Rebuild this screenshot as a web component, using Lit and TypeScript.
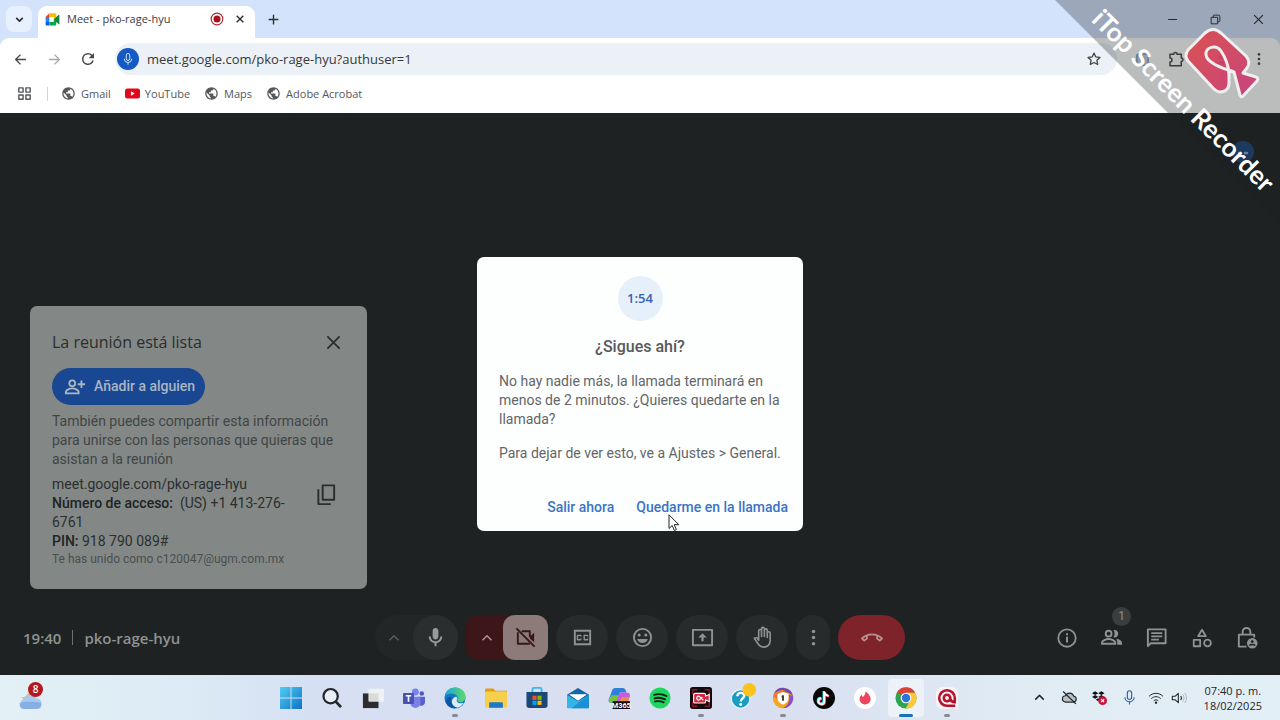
import { LitElement, html, svg, css, TemplateResult, SVGTemplateResult } from "lit";
import { customElement } from "lit/decorators.js";

const icon = (content: SVGTemplateResult, size = 24, box = "0 0 24 24") =>
  html`<svg width=${size} height=${size} viewBox=${box} aria-hidden="true">${content}</svg>`;

const line = (d: string, w = 2) =>
  svg`<path d=${d} fill="none" stroke="currentColor" stroke-width=${w} stroke-linejoin="round"></path>`;
const fill = (d: string) => svg`<path d=${d} fill="currentColor" fill-rule="evenodd"></path>`;

const I = {
  chevDown: svg`${line("M6 9l6 6 6-6", 3)}`,
  chevUp: svg`${line("M6 15l6-6 6 6", 2)}`,
  close: svg`${line("M5 5l14 14M19 5L5 19", 2)}`,
  closeBold: svg`${line("M4 4l16 16M20 4L4 20", 3.4)}`,
  plus: svg`${line("M12 3v18M3 12h18", 2.6)}`,
  back: svg`${line("M22 12H4M12 3l-9 9 9 9", 2.5)}`,
  forward: svg`${line("M2 12h18M12 3l9 9-9 9", 2.5)}`,
  reload: fill("M17.65 6.35A7.95 7.95 0 0 0 12 4a8 8 0 1 0 7.73 10h-2.08A6 6 0 1 1 12 6c1.66 0 3.14.69 4.22 1.78L13 11h7V4l-2.35 2.35z"),
  mic: fill("M12 14c1.66 0 3-1.34 3-3V5c0-1.66-1.34-3-3-3S9 3.34 9 5v6c0 1.66 1.34 3 3 3zM17 11c0 2.76-2.24 5-5 5s-5-2.24-5-5H5c0 3.53 2.61 6.43 6 6.92V21h2v-3.08c3.39-.49 6-3.39 6-6.92h-2z"),
  micLine: svg`<rect x="9" y="2.5" width="6" height="12" rx="3" fill="none" stroke="currentColor" stroke-width="1.600"></rect>${line("M5.500 11.500a6.500 6.500 0 0 0 13 0M12 18v4", 1.6)}`,
  star: svg`${line("M12 3.200l2.700 5.700 6.200.8-4.500 4.300 1.100 6.200L12 17.200l-5.500 3 1.100-6.200L3.100 9.700l6.200-.8z", 2)}`,
  puzzle: svg`${line("M4 5.500h5a2.200 2.200 0 0 1 4.400 0H19v5.300a2.200 2.200 0 0 1 0 4.400V21H4v-5a2.600 2.600 0 0 0 0-5.200z", 2)}`,
  dots: svg`<g fill="currentColor"><circle cx="12" cy="5" r="2"></circle><circle cx="12" cy="12" r="2"></circle><circle cx="12" cy="19" r="2"></circle></g>`,
  apps: svg`${line("M4 4h6v6H4zM14 4h6v6h-6zM4 14h6v6H4zM14 14h6v6h-6z", 2)}`,
  globe: svg`<path fill="#54585b" d="M12 2C6.480 2 2 6.480 2 12s4.480 10 10 10 10-4.480 10-10S17.520 2 12 2zm-1 17.930c-3.950-.49-7-3.850-7-7.930 0-.62.08-1.210.21-1.790L9 15v1c0 1.100.9 2 2 2v1.930zm6.900-2.540c-.26-.81-1-1.390-1.900-1.390h-1v-3c0-.55-.45-1-1-1H8v-2h2c.55 0 1-.45 1-1V7h2c1.100 0 2-.9 2-2v-.41c2.930 1.190 5 4.060 5 7.410 0 2.080-.8 3.970-2.100 5.390z"></path>`,
  youtube: svg`<rect x="0" y="4" width="24" height="16" rx="4" fill="#e0061c"></rect><path d="M9.500 8.500v7l6-3.500z" fill="#fff"></path>`,
  meet: svg`<path d="M1 8l6-6v6z" fill="#e33b2e"></path><path d="M7 2h9.500c1 0 1.500.6 1.500 1.500V9l-4 3V8H7z" fill="#fbbc05"></path><path d="M1 8h6v8H1z" fill="#2684fc"></path><path d="M1 16h6v5.500H2.500C1.500 21.500 1 21 1 20z" fill="#0b5fd0"></path><path d="M7 16h7v-4l4 3v5c0 1-.5 1.500-1.500 1.500H7z" fill="#00a94b"></path><path d="M14 12l4-4 4-3.500c.6-.4 1-.2 1 .5v14c0 .7-.5.9-1 .5L18 16z" fill="#0a8a3a"></path>`,
  record: svg`<circle cx="12" cy="12" r="10" fill="none" stroke="#b3262e" stroke-width="2"></circle><circle cx="12" cy="12" r="6" fill="#a5131d"></circle>`,
  minimize: svg`${line("M5 12h14", 1.6)}`,
  restore: svg`${line("M4 8h12v12H4zM8 8V5.500c0-1 .5-1.500 1.500-1.500H18c1.500 0 2 .5 2 2v8.500c0 1-.5 1.500-1.500 1.500H16", 1.8)}`,
  addPerson: svg`<circle cx="9" cy="8" r="3.200" fill="none" stroke="currentColor" stroke-width="2"></circle>${line("M2 19v-1.500c0-2.500 4.500-4 7-4s7 1.500 7 4V19zM15 9h8M19 5v8", 2)}`,
  copy: svg`${line("M8 2.500h12v15H8zM3.500 6.500v15.500h13", 2)}`,
  camOff: svg`${line("M8 5.500h8.500v6M4 6.500v12h12.500M2.500 2.500l19 19", 2)}<path d="M16.500 11l4.500-4v10l-4.500-4z" fill="currentColor"></path>`,
  cc: fill("M21 4H3v16h18zM19 18H5V6h14v12zM7 15h3c.55 0 1-.45 1-1v-1H9.500v.5h-2v-3h2v.5H11v-1c0-.55-.45-1-1-1H7c-.55 0-1 .45-1 1v4c0 .55.45 1 1 1zm7 0h3c.55 0 1-.45 1-1v-1h-1.500v.5h-2v-3h2v.5H18v-1c0-.55-.45-1-1-1h-3c-.55 0-1 .45-1 1v4c0 .55.45 1 1 1z"),
  smile: svg`<circle cx="12" cy="12" r="9" fill="none" stroke="currentColor" stroke-width="2"></circle><circle cx="8.500" cy="9.300" r="1.600" fill="currentColor"></circle><circle cx="15.500" cy="9.300" r="1.600" fill="currentColor"></circle><path d="M6.500 13.500h11c-.7 2.600-2.800 4.200-5.500 4.200s-4.800-1.600-5.500-4.200z" fill="currentColor"></path>`,
  present: svg`${line("M2 4h20v16H2z", 2)}<path d="M12 7.500l4.500 4.500h-3.300v4h-2.400v-4H7.500z" fill="currentColor"></path>`,
  hand: svg`${line("M8 13V5.200a1.500 1.500 0 0 1 3 0V11V3a1.500 1.500 0 0 1 3 0v8V4.500a1.500 1.500 0 0 1 3 0V12V7.500a1.500 1.500 0 0 1 3 0V15.500c0 4-3 6.500-6.500 6.500-3.500 0-5.300-1.500-6.800-4.300L3.500 12.800c1.500-1 3-.5 3.700.9L8 15z", 1.7)}`,
  hangup: fill("M12 9c-1.600 0-3.150.25-4.600.72v3.100c0 .39-.23.74-.56.9-.98.49-1.870 1.120-2.660 1.850-.18.18-.43.28-.7.28-.28 0-.53-.11-.71-.29L.29 13.080c-.18-.17-.29-.42-.29-.7 0-.28.11-.53.29-.71C3.340 8.780 7.460 7 12 7s8.660 1.780 11.710 4.670c.18.18.29.43.29.71 0 .28-.11.53-.29.71l-2.480 2.480c-.18.18-.43.29-.71.29-.27 0-.52-.11-.7-.28-.79-.74-1.690-1.360-2.670-1.850-.33-.16-.56-.5-.56-.9v-3.100C15.150 9.250 13.600 9 12 9zM5.400 10.600l-2.900 1.800 1.100 1.100 1.900-1.300zM18.600 10.600l2.900 1.800-1.100 1.100-1.900-1.300z"),
  info: svg`<circle cx="12" cy="12" r="9.500" fill="none" stroke="currentColor" stroke-width="2"></circle>${line("M12 10.500V17M12 6.800V9", 2.2)}`,
  people: svg`<circle cx="9" cy="8" r="3" fill="none" stroke="currentColor" stroke-width="2"></circle>${line("M2 18.500V17.500c0-2.400 4.500-3.900 7-3.900s7 1.500 7 3.900v1z", 2)}<path d="M14 4.200c3-.6 5 1.300 5 3.800s-2 4.400-5 3.800c1.600-2.200 1.600-5.400 0-7.600zM17 13.200c3.500.6 6 2 6 4.300v2h-5v-2c0-1.800-.4-3.200-1-4.300z" fill="currentColor"></path>`,
  chat: svg`${line("M3 21V3.500h18.500V18H6z", 2)}${line("M6.500 7.500h11.500M6.500 10.800h11.500M6.500 14.100h8", 1.8)}`,
  shapes: svg`${line("M12 3l4.200 7H7.800zM3 14h7v7H3z", 2)}<circle cx="18" cy="17.500" r="3.700" fill="none" stroke="currentColor" stroke-width="2"></circle>`,
  lock: svg`${line("M12 21.500H4V9h16v3M8 9V6a4 4 0 0 1 8 0v3", 2)}<circle cx="18" cy="18" r="5.500" fill="currentColor"></circle><circle cx="18" cy="16.300" r="1.500" fill="#1e2222"></circle><path d="M15 20.500c1-1.500 5-1.500 6 0" stroke="#1e2222" stroke-width="1.500" fill="none"></path>`,
  cloudOff: svg`<path d="M6.500 18.500a4.500 4.500 0 0 1 0-9A6 6 0 0 1 17.800 10a4.300 4.300 0 0 1 0 8.500z" fill="#b8c0c4" stroke="currentColor" stroke-width="1.700"></path>${line("M3 3.500l18 17.500", 1.8)}`,
  dropbox: svg`<path d="M5 2l5 3-5 3-5-3zM15 2l5 3-5 3-5-3zM5 8l5 3-5 3-5-3zM15 8l5 3-5 3-5-3zM10 13l4 2.500-4 2.500-4-2.500z" fill="#111"></path><circle cx="17" cy="17" r="7" fill="#c8133c"></circle><path d="M14.500 14.500l5 5M19.500 14.500l-5 5" stroke="#fff" stroke-width="1.700"></path>`,
  wifi: svg`${line("M1.500 9.500c6-6 15-6 21 0M5 13c4-4 10-4 14 0M8.500 16.300c2-2 5-2 7 0", 1.5)}<circle cx="12" cy="19" r="1.800" fill="currentColor"></circle>`,
  sound: svg`${line("M2 9.500h4l5-4.500v14l-5-4.500H2z", 1.6)}${line("M14.500 9c1.500 1.800 1.500 4.200 0 6", 1.6)}<path d="M17.500 6.500c2.700 3.200 2.700 7.800 0 11M20.500 4.500c3.600 4.500 3.600 10.500 0 15" fill="none" stroke="#a9b1b6" stroke-width="1.400"></path>`,
};

const APPS: { name: string; art: SVGTemplateResult; state?: string }[] = [
  { name: "Inicio", art: svg`<defs><linearGradient id="w" x2="1" y2="1"><stop stop-color="#52cdf2"></stop><stop offset="1" stop-color="#0f72c4"></stop></linearGradient></defs><path d="M0 0h11.500v11.500H0zM12.500 0H24v11.500H12.500zM0 12.500h11.500V24H0zM12.500 12.500H24V24H12.500z" fill="url(#w)"></path>` },
  { name: "Buscar", art: svg`<circle cx="10.500" cy="10" r="7.800" fill="#e9eef6" stroke="#22262a" stroke-width="2.400"></circle><path d="M16.200 16l5.600 6" stroke="#22262a" stroke-width="3"></path>` },
  { name: "Vista de tareas", art: svg`<path d="M1 7h17v16H1z" fill="#2b2c2d"></path><rect x="7" y="2" width="17" height="14" rx="1" fill="#f3f3f1" opacity=".88"></rect>` },
  { name: "Teams", art: svg`<circle cx="13.500" cy="5.500" r="3.800" fill="#7b83eb"></circle><circle cx="20.500" cy="7" r="2.500" fill="#5059c9"></circle><path d="M17 10.500h7v6a4 4 0 0 1-6 3.500z" fill="#5a61cf"></path><path d="M8 10.500h11v7a5.500 5.500 0 0 1-11 0z" fill="#7b80e4"></path><rect x="0" y="6.500" width="12" height="12" rx="1" fill="#4a51b4"></rect><path d="M3 9.500h6M6 9.500v6.500" stroke="#fff" stroke-width="1.800"></path>` },
  { name: "Edge", state: "open", art: svg`<defs><linearGradient id="e" x2="1"><stop stop-color="#1aa6dc"></stop><stop offset="1" stop-color="#5fd968"></stop></linearGradient></defs><circle cx="12" cy="12" r="11.500" fill="#1577c4"></circle><path d="M.7 10.500C2 3.500 7 .5 12 .5c7 0 11.500 5 11.500 10 0 4-3 6-6 6-2.500 0-3.500-1-3-2.200.8-1.300 1-3.800-.8-5.300C10.500 6 3 6.500.7 10.500z" fill="url(#e)"></path><path d="M14 14c-1 3 3 4.700 7.500 3.300-1.500 2.700-4 4.700-7 5.400-4.500-1-6.500-4.700-5.700-8 .5-2.500 2.400-4 4.700-4.200 1.300.9 1.200 2.300.5 3.500z" fill="#d9ebf6"></path><path d="M9 11c-3 4-1 10 5.500 11.700A11 11 0 0 1 2.500 18C1 13 5 10 9 11z" fill="#0c55a2"></path>` },
  { name: "Explorador", art: svg`<path d="M0 3c0-1 .5-1.500 1.500-1.500H9l2.500 2.500H24v5H0z" fill="#e0a016"></path><rect x="0" y="5" width="24" height="17.500" rx="1.500" fill="#f8cf4b"></rect><path d="M4.500 22.500V18c0-1 .5-1.500 1.500-1.500h12c1 0 1.500.5 1.500 1.500v4.500z" fill="#1d78c4"></path>` },
  { name: "Store", art: svg`<path d="M7 6V2.500C7 1.500 7.500 1 8.500 1h7c1 0 1.500.5 1.500 1.500V6" fill="none" stroke="#35b7e8" stroke-width="2"></path><path d="M.5 5.500h23V20a3 3 0 0 1-3 3h-17a3 3 0 0 1-3-3z" fill="#1c4878"></path><path d="M7 9.500h4.500V14H7z" fill="#f25022"></path><path d="M12.500 9.500H17V14h-4.500z" fill="#7fba00"></path><path d="M7 15h4.500v4.500H7z" fill="#00a4ef"></path><path d="M12.500 15H17v4.500h-4.500z" fill="#ffb900"></path>` },
  { name: "Correo", art: svg`<path d="M0 8.500L12 1l12 7.500V23H0z" fill="#1364a8"></path><path d="M2.500 8.300h19L12 15z" fill="#fff"></path><path d="M0 8.500l12 7.200L24 8.500V22c0 .8-.4 1.200-1.200 1.200H1.200C.4 23.200 0 22.800 0 22z" fill="#34b5e8"></path><path d="M24 8.500L5 23.200h18c.7 0 1-.4 1-1z" fill="#1b8fd3"></path><path d="M2.500 8.300h19L12 14z" fill="#fff"></path>` },
  { name: "M365", art: svg`<path d="M5 2.500C6 1.500 7 1 8.500 1H16c2 0 3 1 3.500 3l.5 2h-7l-3 9c-.5 1.500-1 2-2.500 2H3c-2 0-2.800-1.500-2.200-3.500z" fill="#2f80d8"></path><path d="M1 13l3-4h8l-2 6c-.5 1.500-1 2-2.500 2H3c-2 0-2.500-2-2-4z" fill="#7bc043"></path><path d="M13 6h7c3 0 4.500 1.500 3.800 4l-2 6H9z" fill="#c65be0"></path><path d="M15 11h8.500l-1.700 5H12z" fill="#f08a4b"></path><rect x="5" y="15.500" width="19" height="8.500" fill="#0c0c0c"></rect><text x="14.500" y="22.500" font-size="8" font-weight="700" fill="#fff" text-anchor="middle" font-family="Roboto, sans-serif">M365</text>` },
  { name: "Spotify", art: svg`<circle cx="12" cy="12" r="11.500" fill="#1ed760"></circle><path d="M5.500 8.500c4.500-1.300 9.500-.9 13.500 1.300M6 12.300c4-1 8-.6 11.500 1.200M6.500 15.800c3.300-.8 6.500-.5 9.500 1" fill="none" stroke="#0c1f12" stroke-width="2" stroke-linecap="round"></path>` },
  { name: "Grabador", state: "open", art: svg`<rect x="0" y="0" width="24" height="24" rx="3" fill="#120b0d"></rect><path d="M3 8V3h5M16 3h5v5M3 16v5h5M16 21h5v-5" fill="none" stroke="#8a1628" stroke-width="1.500"></path><path d="M5.500 7h10a1.500 1.500 0 0 1 1.500 1.500V10l4-2v8l-4-2v2a1.500 1.500 0 0 1-1.500 1.500h-10A1.500 1.500 0 0 1 4 16V8.500A1.500 1.500 0 0 1 5.500 7z" fill="#d8243f" stroke="#fff" stroke-width="1.200"></path><path d="M14.500 14.500l-4-4a2 2 0 1 0 0 3.200l3-2.700" fill="none" stroke="#fff" stroke-width="1.300"></path>` },
  { name: "Ayuda", art: svg`<circle cx="10.500" cy="13" r="10.500" fill="#fff"></circle><circle cx="10.500" cy="13" r="9.500" fill="#1b9cc4"></circle><path d="M7 10c0-5 7.500-4.500 7.500-.5 0 3-3.800 3-3.800 6.300" fill="none" stroke="#fff" stroke-width="2.600"></path><circle cx="10.600" cy="19" r="1.600" fill="#fff"></circle><circle cx="20" cy="3" r="7.500" fill="#fbc31c"></circle>` },
  { name: "Norton", state: "open", art: svg`<circle cx="12" cy="12" r="11.200" fill="#f5a623"></circle><path d="M2 7A11.200 11.200 0 0 1 23 10c-4-5-14-7-21-3z" fill="#6a48c8"></path><path d="M23 10c1 7-4 13-11 13 6-3 8-8 6-15z" fill="#8350d8"></path><path d="M1 10c2-5 9-8 14-6-6 0-9 6-6 12z" fill="#ef7a35"></path><path d="M12 5.500l6 2v4.500c0 3.500-2.500 6-6 7.300-3.500-1.300-6-3.800-6-7.300V7.500z" fill="#fff"></path><path d="M12 9v6M10.500 10.500h2" stroke="#333" stroke-width="2"></path>` },
  { name: "TikTok", art: svg`<circle cx="12" cy="12" r="12" fill="#050505"></circle><path d="M12.300 5v10.500a3.200 3.200 0 1 1-3.200-3.200M12.300 5c.3 2.800 2 4.300 4.700 4.500" transform="translate(-.7 -.6)" fill="none" stroke="#25f4ee" stroke-width="2.400"></path><path d="M12.300 5v10.500a3.200 3.200 0 1 1-3.200-3.200M12.300 5c.3 2.800 2 4.300 4.700 4.500" transform="translate(.8 .7)" fill="none" stroke="#fe2c55" stroke-width="2.400"></path><path d="M12.300 5v10.500a3.200 3.200 0 1 1-3.200-3.200M12.300 5c.3 2.800 2 4.300 4.700 4.500" fill="none" stroke="#fff" stroke-width="2.200"></path>` },
  { name: "Tinder", art: svg`<circle cx="12" cy="12" r="12" fill="#fff"></circle><path d="M12.500 5c3 2 5.700 5 5.700 8.300A5.900 5.900 0 0 1 12 19a5.900 5.900 0 0 1-6-5.700c0-2 1-3.700 2.400-4.800.1 1.300.6 2 1.500 2.300C11.400 9.300 12.700 7.500 12.500 5z" fill="#f0435f"></path>` },
  { name: "Chrome", state: "active", art: svg`<circle cx="12" cy="12" r="11.500" fill="#2fa352"></circle><path d="M2 6.200A11.500 11.500 0 0 1 22 6.200H12L7 15z" fill="#dc4237"></path><path d="M22 6.200A11.500 11.500 0 0 1 11.500 23.500l5-8.700L17 9z" fill="#fcc934"></path><path d="M12 6.200h10L17 12z" fill="#fcc934"></path><path d="M2 6.200l5 8.600 1-6z" fill="#2fa352"></path><circle cx="12" cy="12" r="5.800" fill="#fff"></circle><circle cx="12" cy="12" r="4.600" fill="#2d74da"></circle>` },
  { name: "iTop", state: "open", art: svg`<path d="M7 0h10a7 7 0 0 1 7 7v17H7a7 7 0 0 1-7-7V7a7 7 0 0 1 7-7z" fill="#fbf3f3"></path><path d="M21 20.500h-9A8.500 8.500 0 1 1 20.500 12v4.500q-4.500 0-5-4.500M15.500 12a3.500 3.500 0 1 0-3.500 3.500c2 0 3.500-1.500 3.500-3.500z" fill="none" stroke="#b5122f" stroke-width="2.800"></path>` },
];

@customElement("browser-chrome")
class BrowserChrome extends LitElement {
  static styles = css`
    :host { display: block; font-family: "Open Sans", "Noto Sans", sans-serif; color: #2c3033; background: #d3e3fb; }
    svg { display: block; flex: none; }
    button { border: 0; background: none; padding: 0; color: inherit; font: inherit; display: grid; place-items: center; flex: none; }
    .strip { display: flex; height: 38px; align-items: center; padding-left: 6px; }
    .search { width: 26px; height: 26px; border-radius: 8px; background: #e8f0fd; }
    .tab { display: flex; align-items: center; align-self: end; box-sizing: border-box; height: 32px; width: 217px; margin-left: 6px; padding: 0 7px 6px; border-radius: 9px 9px 0 0; background: #fff; }
    .tab .name { flex: 1; margin-left: 7px; line-height: 16px; color: #3a3e41; font-size: 11px; }
    .tab button { width: 16px; height: 16px; margin-left: 8px; }
    .add { width: 26px; height: 26px; margin-left: 5px; }
    .win { display: flex; margin-left: auto; }
    .win button { width: 43px; height: 38px; }
    .bar { display: flex; align-items: center; height: 42px; padding: 0 3px; background: #fff; border-radius: 9px 9px 0 0; color: #44484b; }
    .nav { width: 34px; height: 34px; }
    .nav.off { color: #a5a9ac; }
    .omni { flex: 1; display: flex; align-items: center; height: 32px; margin: 0 8px 0 10px; padding: 0 14px 0 2px; border-radius: 16px; background: #ebf1f6; }
    .live { display: grid; place-items: center; width: 22px; height: 22px; border-radius: 50%; background: #1559c4; color: #dce9ff; }
    .omni input { flex: 1; min-width: 0; border: 0; outline: 0; background: none; margin-left: 8px; padding: 0; font: 13px/20px "Open Sans", "Noto Sans", sans-serif; color: #35393c; }
    .omni button { width: 18px; height: 18px; }
    .tools { display: flex; align-items: center; padding-right: 8px; }
    .tools .tool { width: 34px; height: 34px; }
    .tools .me { width: 56px; }
    .tools .more { width: 20px; }
    .marks { display: flex; align-items: center; height: 33px; padding: 0 16px 6px; box-sizing: border-box; background: #fff; font-size: 11px; line-height: 16px; color: #54585b; gap: 14px; }
    .marks a { display: flex; align-items: center; gap: 5px; color: inherit; text-decoration: none; }
    .rule { width: 1px; height: 14px; background: #c8d6ea; margin-right: -1px; }
  `;
  render() {
    return html`
      <div class="strip">
        <button class="search" aria-label="Buscar pestañas">${icon(I.chevDown, 13)}</button>
        <div class="tab">
          ${icon(I.meet, 15)}
          <span class="name">Meet - pko-rage-hyu</span>
          ${icon(I.record, 14)}
          <button aria-label="Cerrar pestaña">${icon(I.closeBold, 10)}</button>
        </div>
        <button class="add" aria-label="Nueva pestaña">${icon(I.plus, 13)}</button>
        <div class="win">
          <button aria-label="Minimizar">${icon(I.minimize, 15)}</button>
          <button aria-label="Restaurar">${icon(I.restore, 13)}</button>
          <button aria-label="Cerrar">${icon(I.close, 15)}</button>
        </div>
      </div>
      <div class="bar">
        <button class="nav" aria-label="Atrás">${icon(I.back, 13)}</button>
        <button class="nav off" aria-label="Adelante">${icon(I.forward, 13)}</button>
        <button class="nav" aria-label="Recargar">${icon(I.reload, 18)}</button>
        <div class="omni">
          <span class="live">${icon(I.micLine, 14)}</span>
          <input aria-label="Dirección" value="meet.google.com/pko-rage-hyu?authuser=1" />
          <button aria-label="Marcador">${icon(I.star, 16)}</button>
        </div>
        <div class="tools">
          <button class="tool" aria-label="Extensión">${icon(svg`<rect x="3" y="3" width="18" height="18" rx="3" fill="#c5d3e4" stroke="#6d8db5" stroke-width="2"></rect>`, 15)}</button>
          <button class="tool" aria-label="Extensiones">${icon(I.puzzle, 18)}</button>
          <button class="tool me" aria-label="Perfil">${icon(svg`<circle cx="12" cy="8" r="4" fill="#3f66c8"></circle><path d="M4 20c0-8 16-8 16 0z" fill="#3f66c8"></path>`, 17)}</button>
          <button class="tool more" aria-label="Más">${icon(I.dots, 16)}</button>
        </div>
      </div>
      <nav class="marks">
        <button aria-label="Aplicaciones">${icon(I.apps, 17)}</button>
        <span class="rule"></span>
        ${[
          [I.globe, "Gmail"],
          [I.youtube, "YouTube"],
          [I.globe, "Maps"],
          [I.globe, "Adobe Acrobat"],
        ].map(([i, t]) => html`<a href="#">${icon(i as SVGTemplateResult, 15)}<span>${t}</span></a>`)}
      </nav>
    `;
  }
}

@customElement("meet-stage")
class MeetStage extends LitElement {
  static styles = css`
    :host { display: flex; flex-direction: column; position: relative; background: #1e2222; color: #8e9291; font-family: Roboto, sans-serif; }
    svg { display: block; flex: none; }
    button { border: 0; background: none; padding: 0; margin: 0; color: inherit; font: inherit; display: grid; place-items: center; }
    h2, p { margin: 0; font-weight: 400; }
    .room { flex: 1; display: flex; align-items: end; padding: 0 30px 11px; }
    .card { box-sizing: border-box; width: 337px; padding: 21px 22px 22px; border-radius: 7px; background: #838886; color: #2a2e2e; font-size: 14px; line-height: 19px; }
    .head { display: flex; justify-content: space-between; align-items: center; height: 30px; }
    .head h2 { font: 400 16px/24px "Open Sans", sans-serif; }
    .head button { width: 23px; height: 30px; }
    .invite { display: flex; align-items: center; gap: 8px; height: 37px; margin: 11px 0 7px; padding: 0 10px 0 12px; border-radius: 19px; background: #1a4792; color: #a9b6c4; font-weight: 500; }
    .note { color: #414545; }
    .join { display: flex; justify-content: space-between; margin-top: 6px; }
    .join > div { width: 236px; }
    .join button { width: 38px; height: 38px; }
    b { font-weight: 500; color: #202424; }
    .as { font-size: 12px; line-height: 16px; color: #4a4e4e; }
    .foot { display: grid; grid-template-columns: 1fr auto 1fr; align-items: center; height: 75px; padding: 0 11px; }
    .where { display: flex; align-items: center; padding-left: 12px; font: 600 15px/20px "Open Sans", sans-serif; color: #8f9392; }
    .where i { width: 1px; height: 15px; margin: 0 11px; background: #6c7070; }
    .controls { display: flex; gap: 8px; }
    .pair { display: flex; border-radius: 23px; background: #222626; }
    .pair button { height: 45px; }
    .pair .opts { width: 38px; color: #595d5d; }
    .pair .main { width: 45px; border-radius: 23px; background: #2a2e2f; color: #989b9b; }
    .pair.muted { border-radius: 12px; background: #3c1618; }
    .pair.muted .opts { width: 37px; padding-left: 4px; color: #b18f8d; }
    .pair.muted .main { border-radius: 12px; background: #8d7b79; color: #35191a; }
    .ctl { width: 52px; height: 45px; border-radius: 23px; background: #272b2c; color: #8e9291; }
    .ctl.slim { width: 34px; border-radius: 17px; }
    .ctl.end { width: 67px; background: #7d2329; color: #b9908f; }
    .side { display: flex; justify-content: end; }
    .side button { position: relative; width: 45px; height: 45px; }
    .badge { position: absolute; top: -8px; right: 3px; width: 19px; height: 19px; border-radius: 50%; background: #3a3e3f; font: 12px/19px Roboto, sans-serif; text-align: center; }
    .self { position: absolute; top: 28px; right: 26px; }
    .veil { position: absolute; inset: 0; display: grid; place-items: center; }
    .dialog { position: relative; box-sizing: border-box; width: 326px; padding: 19px 15px 7px 22px; border-radius: 7px; background: #fdfefe; color: #626668; font-size: 14px; line-height: 19px; }
    .timer { width: 45px; height: 45px; margin: 0 auto; border-radius: 50%; background: #e6f0fb; color: #3a62ae; font: 600 13px/45px "Open Sans", sans-serif; text-align: center; }
    .copy { padding-right: 7px; }
    .dialog h2 { margin: 14px 0 13px; text-align: center; font: 500 16px/24px Roboto, sans-serif; color: #55595b; }
    .dialog p + p { margin-top: 15px; }
    .actions { display: flex; justify-content: end; gap: 22px; margin-top: 27px; color: #3b74c4; font: 500 14px/34px Roboto, sans-serif; }
    .pointer { position: absolute; left: 191px; top: 257px; }
  `;
  render() {
    return html`
      <svg class="self" width="22" height="22" viewBox="0 0 22 22" aria-hidden="true"><circle cx="11" cy="11" r="11" fill="#1c4578"></circle><path d="M7 12h2M13 12h2" stroke="#8fa6c4" stroke-width="2.500" stroke-linecap="round"></path></svg>
      <div class="room">
        <section class="card">
          <div class="head">
            <h2>La reunión está lista</h2>
            <button aria-label="Cerrar">${icon(I.close, 21)}</button>
          </div>
          <button class="invite">${icon(I.addPerson, 22)}<span>Añadir a alguien</span></button>
          <p class="note">También puedes compartir esta información para unirse con las personas que quieras que asistan a la reunión</p>
          <div class="join">
            <div>
              <p>meet.google.com/pko-rage-hyu</p>
              <p><b>Número de acceso:</b>&nbsp; <span>(US) +1 413-276-</span><wbr /><span>6761</span></p>
              <p><b>PIN:</b> 918 790 089#</p>
            </div>
            <button aria-label="Copiar">${icon(I.copy, 23)}</button>
          </div>
          <p class="as">Te has unido como c120047@ugm.com.mx</p>
        </section>
      </div>
      <footer class="foot">
        <div class="where"><span>19:40</span><i></i><span>pko-rage-hyu</span></div>
        <div class="controls">
          <div class="pair">
            <button class="opts" aria-label="Opciones de audio">${icon(I.chevUp, 18)}</button>
            <button class="main" aria-label="Micrófono">${icon(I.mic, 23)}</button>
          </div>
          <div class="pair muted">
            <button class="opts" aria-label="Opciones de vídeo">${icon(I.chevUp, 18)}</button>
            <button class="main" aria-label="Cámara">${icon(I.camOff, 23)}</button>
          </div>
          <button class="ctl" aria-label="Subtítulos">${icon(I.cc, 23)}</button>
          <button class="ctl" aria-label="Reacciones">${icon(I.smile, 23)}</button>
          <button class="ctl" aria-label="Presentar">${icon(I.present, 23)}</button>
          <button class="ctl" aria-label="Levantar la mano">${icon(I.hand, 23)}</button>
          <button class="ctl slim" aria-label="Más opciones">${icon(I.dots, 21)}</button>
          <button class="ctl end" aria-label="Salir">${icon(I.hangup, 22)}</button>
        </div>
        <div class="side">
          <button aria-label="Detalles">${icon(I.info, 22)}</button>
          <button aria-label="Personas">${icon(I.people, 23)}<span class="badge">1</span></button>
          <button aria-label="Chat">${icon(I.chat, 23)}</button>
          <button aria-label="Actividades">${icon(I.shapes, 22)}</button>
          <button aria-label="Controles">${icon(I.lock, 23)}</button>
        </div>
      </footer>
      <div class="veil">
        <div class="dialog" role="dialog" aria-labelledby="ask">
          <div class="copy">
            <div class="timer">1:54</div>
            <h2 id="ask">¿Sigues ahí?</h2>
            <p>No hay nadie más, la llamada terminará en menos de 2 minutos. ¿Quieres quedarte en la llamada?</p>
            <p>Para dejar de ver esto, ve a Ajustes &gt; General.</p>
          </div>
          <div class="actions"><button>Salir ahora</button><button>Quedarme en la llamada</button></div>
          <svg class="pointer" width="13" height="18" viewBox="0 0 13 18" aria-hidden="true"><path d="M1 .8v13.700l3.200-3 2.200 5 2-.9-2.200-4.900h4.600z" fill="#fff" stroke="#222" stroke-width="1"></path></svg>
        </div>
      </div>
    `;
  }
}

@customElement("task-bar")
class TaskBar extends LitElement {
  static styles = css`
    :host { display: grid; grid-template-columns: 13fr auto 15fr; align-items: center; height: 45px; background: linear-gradient(90deg, #e3f0f5 0%, #dcebf5 14%, #d6e0f3 24%, #d8dff0 60%, #e0ebf4 80%, #e3eff6 100%); font-family: "Open Sans", "Noto Sans", sans-serif; color: #22272b; }
    svg { display: block; overflow: visible; }
    button { border: 0; background: none; padding: 0; color: inherit; font: inherit; display: grid; place-items: center; }
    .weather { position: relative; width: 30px; height: 40px; margin-left: 15px; }
    .count { position: absolute; top: 4px; right: 2px; width: 15px; height: 15px; border-radius: 50%; background: #b3181f; color: #fff; font: 600 10px/15px "Open Sans", sans-serif; }
    .apps { display: flex; gap: 5px; }
    .app { position: relative; width: 36px; height: 38px; border-radius: 4px; }
    .app.active { background: #edf2f9; }
    .app.open::after, .app.active::after { content: ""; position: absolute; bottom: 0; left: 15px; width: 6px; height: 3px; border-radius: 2px; background: #858a93; }
    .app.active::after { left: 11px; width: 14px; background: #1572b5; }
    .tray { display: flex; justify-content: end; align-items: center; padding-right: 18px; }
    .tray button { width: 30px; height: 38px; }
    .tray .duo { width: 46px; grid-auto-flow: column; }
    .tray .clock { width: auto; margin-left: 13px; display: block; text-align: right; font-size: 11px; line-height: 15px; white-space: nowrap; }
    .mic { color: #2f62a8; }
  `;
  render() {
    return html`
      <button class="weather" aria-label="Tiempo">
        ${icon(svg`<path d="M2 12c5 0 9-4 9-9 5 3 5 10 0 13z" fill="#e8a838"></path><path d="M5 23a5 5 0 0 1 0-9.500 7 7 0 0 1 13-.5 5 5 0 0 1 1 10z" fill="#a9c8ee"></path><path d="M1 18c2-2 20-2 22 0 1 3-1 6-4 6H5c-3 0-5-3-4-6z" fill="#86b0e2"></path>`, 23)}
        <span class="count">8</span>
      </button>
      <nav class="apps">
        ${APPS.map((a) => html`<button class="app ${a.state ?? ""}" aria-label=${a.name}>${icon(a.art, 22)}</button>`)}
      </nav>
      <div class="tray">
        <button aria-label="Iconos ocultos">${icon(I.chevUp, 17)}</button>
        <button aria-label="OneDrive">${icon(I.cloudOff, 17)}</button>
        <button aria-label="Dropbox">${icon(I.dropbox, 15)}</button>
        <button class="mic" aria-label="Micrófono">${icon(I.micLine, 17)}</button>
        <button class="duo" aria-label="Red y sonido">${icon(I.wifi, 16)}${icon(I.sound, 16)}</button>
        <button class="clock"><div>07:40 p. m.</div><div>18/02/2025</div></button>
      </div>
    `;
  }
}

@customElement("app-root")
class AppRoot extends LitElement {
  static styles = css`
    :host { display: flex; flex-direction: column; position: relative; height: 100vh; overflow: hidden; }
    meet-stage { flex: 1; }
    .mark { position: absolute; top: 0; right: 0; pointer-events: none; }
    .word { font: 700 26px Lato, sans-serif; }
  `;
  render(): TemplateResult {
    return html`
      <browser-chrome></browser-chrome>
      <meet-stage></meet-stage>
      <task-bar></task-bar>
      <svg class="mark" width="225" height="225" viewBox="0 0 225 225">
        <defs><linearGradient id="reel" x2="1" y2="1"><stop stop-color="#dc4a48"></stop><stop offset="1" stop-color="#c93a7c"></stop></linearGradient></defs>
        <path d="M0 0h225v225z" fill="#1e2020" fill-opacity=".3"></path>
        <path d="M133 50L150 33q8-7 16 0L191 56q5 6 1 12l-4 5 13 4q3 1 1 4L188 96q-2 2-3-1L179 72l-5-1V84q-1 8-9 8-3 0-7-4L133 61q-4-5 0-11z" fill="url(#reel)" fill-opacity=".93" stroke="#f0eeee" stroke-width="3" stroke-linejoin="round"></path>
        <path d="M177 71C165 68 152 62 151 55c-1-8 10-11 15-4 4 6 7 12 8 22" fill="none" stroke="#f0eeee" stroke-width="3" stroke-linecap="round"></path>
        <text class="word" transform="translate(129 100) rotate(45)" text-anchor="middle" dominant-baseline="central" fill="#fff">iTop Screen Recorder</text>
      </svg>
    `;
  }
}
